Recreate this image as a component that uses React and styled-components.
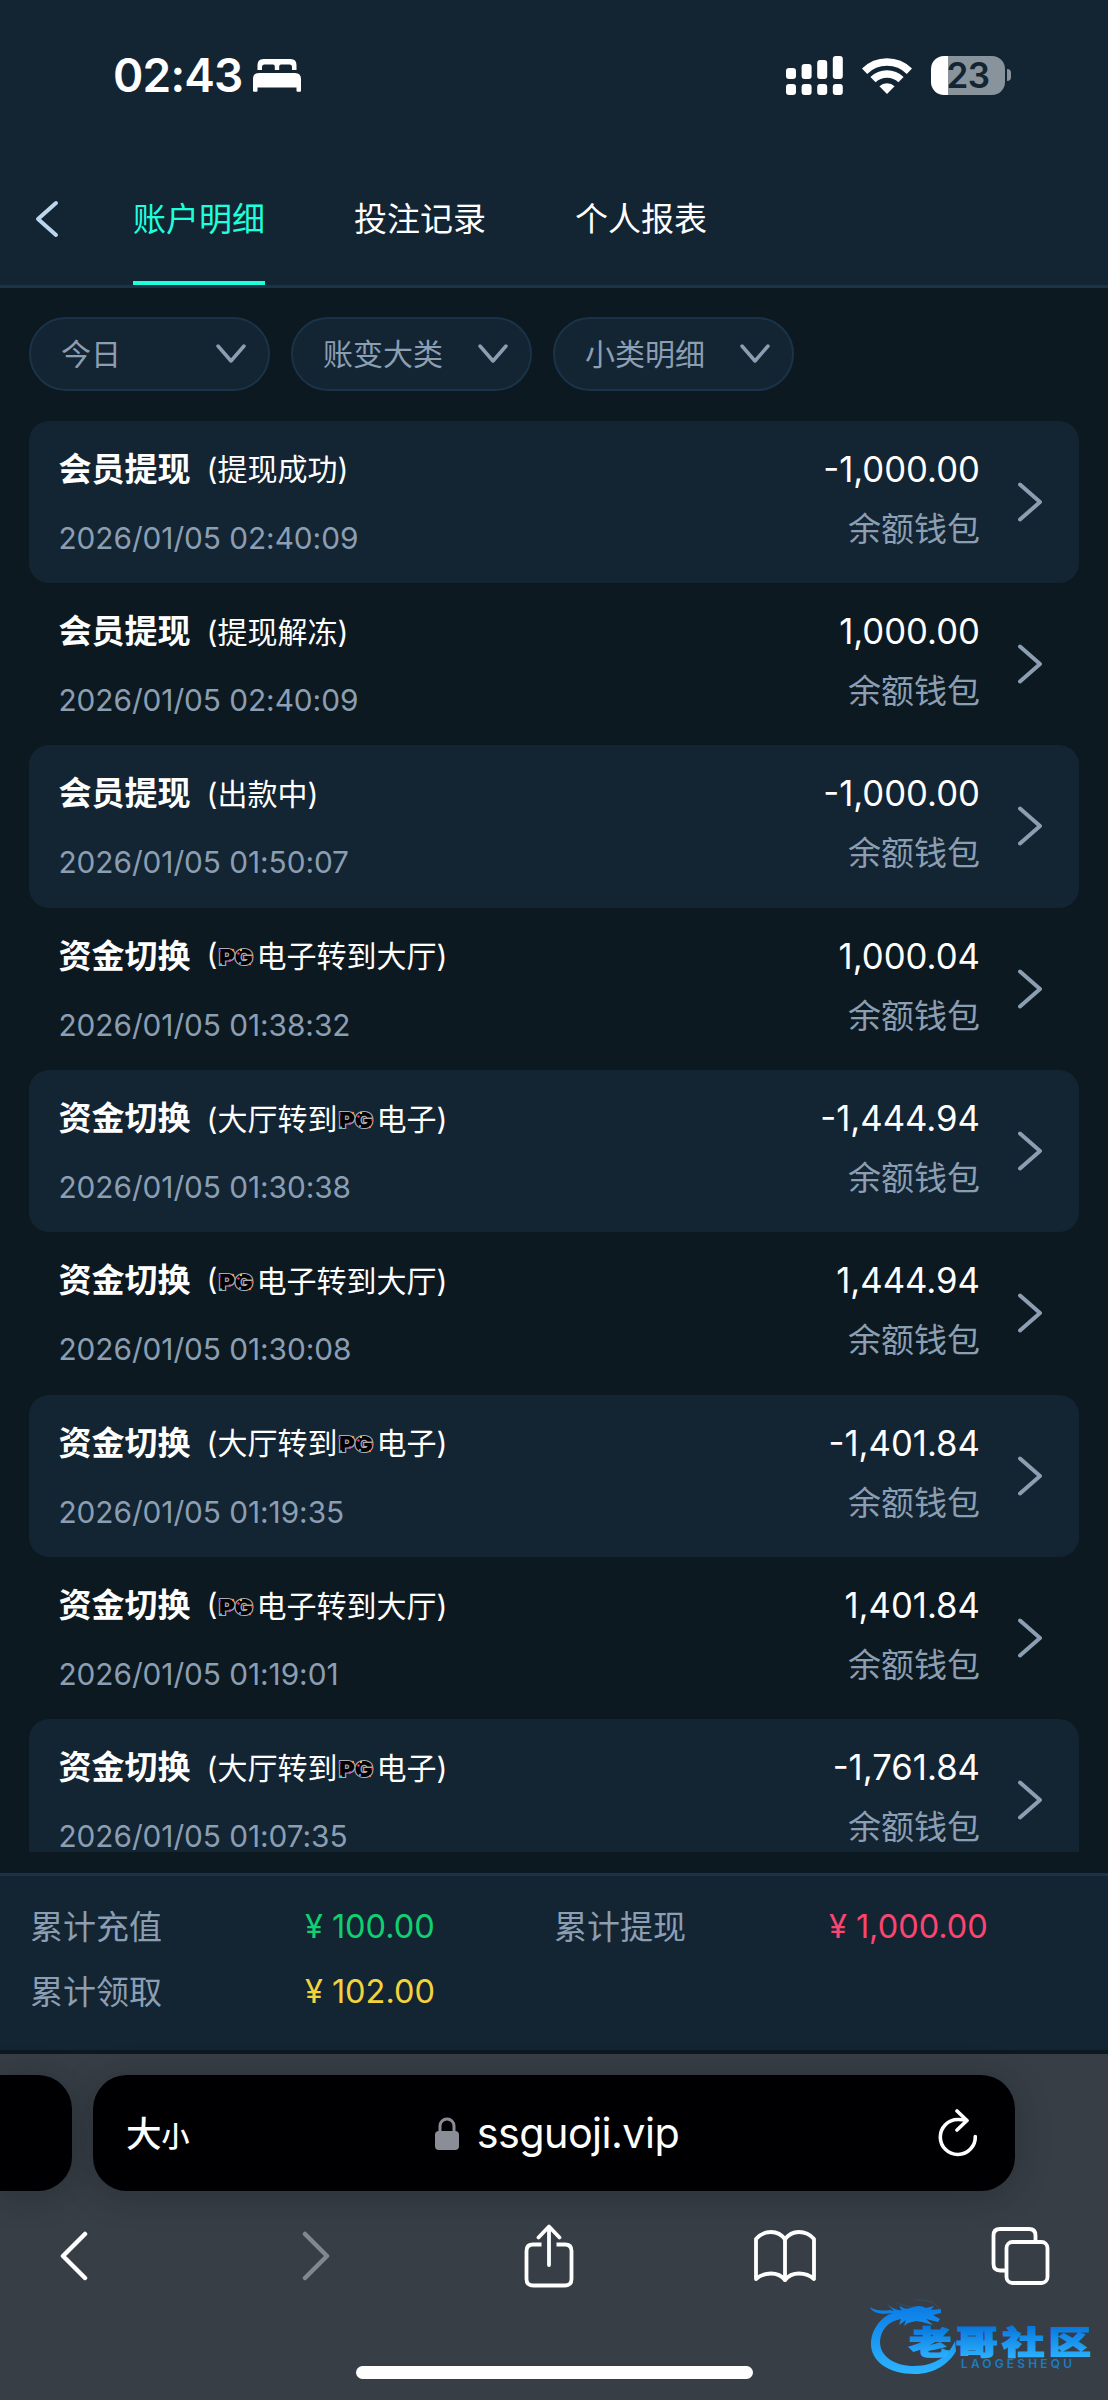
import styled, { createGlobalStyle } from "styled-components"

const color = {
    page: "#0d1921",
    panel: "#132433",
    line: "#1a3348",
    muted: "#8b9eb2",
    accent: "#1effdc",
    browser: "#383e45",
}

const GlobalStyle = createGlobalStyle`
    body {
        margin: 0;
        background: ${color.page};
        color: #fff;
        font-family: Inter, "Noto Sans CJK SC", sans-serif;
    }
`

const Screen = styled.div`
    width: 1108px;
    height: 2400px;
    display: flex;
    flex-direction: column;
    overflow: hidden;
    position: relative;
`

const StatusBar = styled.div`
    height: 150px;
    box-sizing: border-box;
    padding: 0 97px 0 113px;
    display: flex;
    align-items: center;
    justify-content: space-between;
    background: ${color.panel};
`

const Clock = styled.div`
    display: flex;
    align-items: center;
    gap: 10px;
    font-size: 46px;
    font-weight: 600;
    letter-spacing: -0.8px;
    line-height: 50px;
`

const StatusIcons = styled.div`
    display: flex;
    align-items: center;
    gap: 19px;
`

const Battery = styled.div`
    display: flex;
    align-items: center;
    gap: 2px;
`

const BatteryBody = styled.div`
    width: 74px;
    height: 39px;
    border-radius: 13px;
    background: linear-gradient(90deg, #fff 17px, #89939b 17px);
    color: ${color.panel};
    font-size: 35px;
    font-weight: 600;
    line-height: 39px;
    text-align: center;
    letter-spacing: -0.5px;
`

const BatteryCap = styled.div`
    width: 4px;
    height: 12px;
    border-radius: 0 5px 5px 0;
    background: #89939b;
`

const Header = styled.header`
    height: 138px;
    box-sizing: border-box;
    padding-left: 35px;
    display: flex;
    background: ${color.panel};
    border-bottom: 3px solid ${color.line};

    > svg {
        margin: 50px 74px 0 0;
        flex: none;
    }
`

const Tabs = styled.nav`
    display: flex;
    gap: 89px;
`

const Tab = styled.a`
    box-sizing: border-box;
    height: 135px;
    font-size: 33px;
    line-height: 139px;
    color: ${(props) => (props.$active ? color.accent : "#fff")};
    background: ${(props) =>
        props.$active ? `linear-gradient(${color.accent}, ${color.accent}) bottom / 100% 4px no-repeat` : "none"};
`

const Filters = styled.div`
    display: flex;
    gap: 21px;
    padding: 29px 29px 0;
`

const Filter = styled.div`
    width: 241px;
    height: 74px;
    box-sizing: border-box;
    padding: 0 22px 5px 30px;
    display: flex;
    align-items: center;
    justify-content: space-between;
    background: ${color.panel};
    border: 2.5px solid ${color.line};
    border-radius: 37px;
    color: ${color.muted};
    font-size: 30px;

    svg {
        margin-top: 5px;
    }
`

const List = styled.div`
    height: 1431.5px;
    margin: 29.5px 29px 21px;
    flex: none;
    overflow: hidden;
`

const Row = styled.div`
    height: 162.35px;
    box-sizing: border-box;
    padding: 0 37px 0 29.5px;
    display: flex;
    align-items: center;
    border-radius: 20px;

    &:nth-child(odd) {
        background: ${color.panel};
    }
`

const Info = styled.div`
    flex: 1;
`

const Title = styled.div`
    display: flex;
    align-items: center;
    height: 46px;
    white-space: pre;
    font-size: 33px;
    font-weight: 600;
`

const Note = styled.span`
    display: flex;
    align-items: center;
    margin-left: 16px;
    padding-top: 1px;
    font-size: 30px;
    font-weight: 400;

    svg {
        margin: 6px -1px 0 0;
    }
`

const Time = styled.div`
    margin-top: 26px;
    color: ${color.muted};
    font-size: 29.8px;
    line-height: 44px;
    letter-spacing: -0.05px;
`

const Money = styled.div`
    padding-bottom: 6px;
    text-align: right;
    font-size: 34.7px;
    line-height: 48px;
`

const Wallet = styled.div`
    margin-top: 12px;
    color: ${color.muted};
    font-size: 33px;
    line-height: 48px;
`

const Arrow = styled.div`
    width: 24px;
    margin-left: 38px;
    display: flex;
`

const Summary = styled.footer`
    height: 177px;
    box-sizing: border-box;
    padding: 17px 30px 0;
    display: grid;
    grid-template-columns: 274px 250px 274px 250px;
    grid-auto-rows: 65px;
    align-items: center;
    background: ${color.panel};
    border-top: 3px solid ${color.line};
    font-size: 33px;
    flex: none;
`

const Label = styled.span`
    padding-bottom: 2px;
    color: ${color.muted};
`

const Total = styled.span`
    display: flex;
    gap: 9px;
    padding: 1px 0 0 1px;
    font-size: 32.5px;
    color: ${(props) => props.$tone};
`

const Browser = styled.div`
    flex: 1;
    margin-top: 4px;
    background: ${color.browser};
    display: flex;
    flex-direction: column;
`

const AddressRow = styled.div`
    margin-top: 21px;
    display: flex;
    gap: 21px;
`

const PreviousTab = styled.div`
    width: 72px;
    height: 116px;
    border-radius: 0 34px 34px 0;
    background: #000003;
    box-shadow: 0 4px 34px rgba(10, 20, 28, 0.3);
`

const AddressBar = styled.div`
    width: 922px;
    height: 116px;
    box-sizing: border-box;
    padding: 0 37px 0 33px;
    display: flex;
    align-items: center;
    justify-content: space-between;
    border-radius: 34px;
    background: #000003;
    box-shadow: 0 4px 34px rgba(10, 20, 28, 0.3);
`

const TextSize = styled.div`
    width: 50px;
    padding-top: 5px;
    white-space: nowrap;
    font-size: 35.5px;
    font-weight: 500;
    line-height: 50px;

    small {
        font-size: 28px;
    }
`

const Host = styled.div`
    display: flex;
    align-items: center;
    gap: 18px;
    font-size: 41.3px;
    letter-spacing: -0.55px;
`

const Toolbar = styled.div`
    margin-top: 32px;
    padding-left: 60px;
    height: 66px;
    display: grid;
    grid-template-columns: 242px 222px 229.5px 237px 1fr;
    align-items: center;
`

const HomeIndicator = styled.div`
    width: 397px;
    height: 13px;
    margin: 77px auto 0;
    border-radius: 7px;
    background: #fff;
`

const Watermark = styled.svg`
    position: absolute;
    left: 867px;
    top: 2294px;
`

const records = [
    { type: "会员提现", note: "(提现成功)", time: "2026/01/05 02:40:09", amount: "-1,000.00" },
    { type: "会员提现", note: "(提现解冻)", time: "2026/01/05 02:40:09", amount: "1,000.00" },
    { type: "会员提现", note: "(出款中)", time: "2026/01/05 01:50:07", amount: "-1,000.00" },
    { type: "资金切换", note: "(PG电子转到大厅)", time: "2026/01/05 01:38:32", amount: "1,000.04" },
    { type: "资金切换", note: "(大厅转到PG电子)", time: "2026/01/05 01:30:38", amount: "-1,444.94" },
    { type: "资金切换", note: "(PG电子转到大厅)", time: "2026/01/05 01:30:08", amount: "1,444.94" },
    { type: "资金切换", note: "(大厅转到PG电子)", time: "2026/01/05 01:19:35", amount: "-1,401.84" },
    { type: "资金切换", note: "(PG电子转到大厅)", time: "2026/01/05 01:19:01", amount: "1,401.84" },
    { type: "资金切换", note: "(大厅转到PG电子)", time: "2026/01/05 01:07:35", amount: "-1,761.84" },
]

function Chevron({ width, height, points, stroke = color.muted, weight = 4 }) {
    return (
        <svg width={width} height={height} fill="none" stroke={stroke} strokeWidth={weight} strokeLinecap="round" strokeLinejoin="round">
            <polyline points={points} />
        </svg>
    )
}

function BedIcon() {
    return (
        <svg width="48" height="33" viewBox="0 0 48 33" fill="#fff">
            <path d="M4.500 11V6q0-6 6-6h27q6 0 6 6v5h-4.500V8q0-2.500-2.500-2.500H28q-1.800 0-1.800 2V11h-4.400V7.500q0-2-1.800-2h-8.500Q9 5.500 9 8v3z" />
            <path d="M0 32V20q0-6 6-6h36q6 0 6 6v12q0 .8-1 .8h-2.500q-1 0-1-1V28.500h-39V32q0 .8-1 .8H1q-1 0-1-.8z" />
        </svg>
    )
}

function SignalIcon() {
    const tops = [12, 8, 4, 0]
    return (
        <svg width="57" height="39" fill="#fff">
            {tops.map((top, i) => (
                <g key={top}>
                    <rect x={i * 15.6} y={top} width="10" height={23 - top} rx="3" />
                    <rect x={i * 15.6} y="28" width="10" height="11" rx="3" />
                </g>
            ))}
        </svg>
    )
}

function WifiIcon() {
    return (
        <svg width="50" height="37" viewBox="0 0 50 37" fill="none" stroke="#fff" strokeWidth="7.500">
            <path d="M2.600 14.200a32 32 0 0 1 44.800 0" />
            <path d="M11 22.600a20 20 0 0 1 28 0" />
            <path d="M25 37l-7.600-7.800a11 11 0 0 1 15.200 0z" fill="#fff" stroke="none" />
        </svg>
    )
}

function PgLogo() {
    return (
        <svg width="40" height="30" viewBox="0 -4 40 30">
            <text
                x="2"
                y="18.500"
                textLength="34"
                lengthAdjust="spacingAndGlyphs"
                fontFamily="Inter"
                fontSize="22"
                fontWeight="900"
                fill="#000"
                stroke="#a9adb2"
                strokeWidth="2.200"
                paintOrder="stroke"
            >
                PG
            </text>
            <circle cx="2.500" cy="5" r="1.200" fill="#7a3cff" />
            <circle cx="16" cy="4" r="1.200" fill="#ff8a3c" />
            <circle cx="13" cy="14.500" r="1.200" fill="#e04ad8" />
            <circle cx="4" cy="18.500" r="1.200" fill="#3cc8e8" />
            <circle cx="24" cy="4" r="1.200" fill="#f0c040" />
            <circle cx="21.500" cy="7.500" r="1.200" fill="#f03c8c" />
            <circle cx="23" cy="17" r="1.200" fill="#3c9cff" />
            <circle cx="35.500" cy="11" r="1.200" fill="#f0443c" />
            <circle cx="33" cy="18" r="1.200" fill="#ff7a3c" />
        </svg>
    )
}

function LockIcon() {
    return (
        <svg width="24" height="33" viewBox="0 0 24 33">
            <rect y="14" width="24" height="19" rx="4" fill="#8b8e97" />
            <path d="M5 15V9a7 7 0 0 1 14 0v6" fill="none" stroke="#8b8e97" strokeWidth="3" />
        </svg>
    )
}

function ReloadIcon() {
    return (
        <svg width="40" height="48" viewBox="0 0 40 48" fill="none" stroke="#fff" strokeWidth="3.600" strokeLinecap="round" strokeLinejoin="round">
            <path d="M37.300 27.500A17.500 17.500 0 1 1 19.800 10.500q5 0 8.700 1" />
            <path d="M19 2l10 9.500-10 9.500" />
        </svg>
    )
}

function ShareIcon() {
    return (
        <svg width="50" height="64" viewBox="0 0 50 64" fill="none" stroke="#fff" strokeWidth="3.800" strokeLinecap="round" strokeLinejoin="round">
            <path d="M17.500 20.500H9q-6.500 0-6.500 6.500v28q0 6.500 6.500 6.500h32q6.500 0 6.500-6.500V27q0-6.500-6.500-6.500h-8.500" strokeLinecap="butt" />
            <path d="M25 41V3M14.500 13.500L25 2.500l10.500 11" />
        </svg>
    )
}

function BookIcon() {
    return (
        <svg width="62" height="52" viewBox="0 0 62 52" fill="none" stroke="#fff" strokeWidth="3.800" strokeLinecap="round" strokeLinejoin="round">
            <path d="M31 9.500Q26 2 17 2 8 2 2 9v40q6-5.500 15-5.500T31 50q5-6.500 14-6.500T60 49V9q-6-7-15-7T31 9.500z" />
            <path d="M31 9.500V50" />
        </svg>
    )
}

function TabsIcon() {
    return (
        <svg width="59" height="58" viewBox="0 0 59 58" fill="none" stroke="#fff" strokeWidth="3.800">
            <rect x="15.500" y="15" width="41" height="41" rx="6" />
            <path d="M15 43.500H9q-6.500 0-6.500-6.500V8.500Q2.500 2 9 2h29q6.500 0 6.500 6.500V15" />
        </svg>
    )
}

function CommunityMark() {
    return (
        <Watermark width="236" height="84" viewBox="0 0 236 84">
            <defs>
                <linearGradient id="swirl" x1="0" y1="10" x2="0" y2="80" gradientUnits="userSpaceOnUse">
                    <stop offset="0" stopColor="#0a7be6" />
                    <stop offset="1" stopColor="#2cb4ff" />
                </linearGradient>
                <linearGradient id="name" x1="0" y1="33" x2="0" y2="62" gradientUnits="userSpaceOnUse">
                    <stop offset="0" stopColor="#0878df" />
                    <stop offset="1" stopColor="#2aaefc" />
                </linearGradient>
            </defs>
            <g fill="url(#swirl)">
                <path d="M3 13q7 5 20 3l4 1-7-7q8 7 15 6-3-2-2-4 5 4 10 2 9-4 16 0l8-2-3 4 10-1v4l-8 2 7 4-2 3-12-3 7 6-11-3-6-1-8 2-4 3 2-6-7 5 2-6C20 27 13 38 13 48c0 14 14 24 34 24 22 0 35-11 41-25l1 10C82 70 67 80 48 80 21 80 4 67 4 50 4 35 15 22 26 19 14 21 5 19 3 13z" />
            </g>
            <path d="M28 8q12 6 22 5M48 6q20-1 24 9" fill="none" stroke="#285f8c" strokeWidth="1" opacity="0.500" />
            <text
                x="31.500"
                y="60"
                transform="scale(1.330 1)"
                textLength="137"
                fontFamily="Noto Sans CJK SC"
                fontSize="32"
                fontWeight="900"
                fill="url(#name)"
                stroke="url(#name)"
                strokeWidth="1.200"
            >
                老哥社区
            </text>
            <text x="94" y="73.500" textLength="111" fontFamily="Inter" fontSize="12" fontWeight="600" fill="#1a7cc4">
                LAOGESHEQU
            </text>
        </Watermark>
    )
}

function App() {
    return (
        <Screen>
            <GlobalStyle />
            <StatusBar>
                <Clock>
                    02:43
                    <BedIcon />
                </Clock>
                <StatusIcons>
                    <SignalIcon />
                    <WifiIcon />
                    <Battery>
                        <BatteryBody>23</BatteryBody>
                        <BatteryCap />
                    </Battery>
                </StatusIcons>
            </StatusBar>
            <Header>
                <Chevron width={24} height={38} points="21,3 3,19 21,35" stroke="#bcd6ee" />
                <Tabs>
                    <Tab $active>账户明细</Tab>
                    <Tab>投注记录</Tab>
                    <Tab>个人报表</Tab>
                </Tabs>
            </Header>
            <Filters>
                {["今日", "账变大类", "小类明细"].map((name) => (
                    <Filter key={name}>
                        {name}
                        <Chevron width={30} height={20} points="2,2 15,17 28,2" weight={3.5} />
                    </Filter>
                ))}
            </Filters>
            <List>
                {records.map((record) => {
                    const [before, after] = record.note.split("PG")
                    return (
                        <Row key={record.time + record.amount}>
                            <Info>
                                <Title>
                                    {record.type}
                                    <Note>
                                        {before}
                                        {after && <PgLogo />}
                                        {after}
                                    </Note>
                                </Title>
                                <Time>{record.time}</Time>
                            </Info>
                            <Money>
                                {record.amount}
                                <Wallet>余额钱包</Wallet>
                            </Money>
                            <Arrow>
                                <Chevron width={24} height={40} points="2,2.500 22,20 2,37.500" />
                            </Arrow>
                        </Row>
                    )
                })}
            </List>
            <Summary>
                <Label>累计充值</Label>
                <Total $tone="#10d070">
                    <span>¥</span>100.00
                </Total>
                <Label>累计提现</Label>
                <Total $tone="#fb4570">
                    <span>¥</span>1,000.00
                </Total>
                <Label>累计领取</Label>
                <Total $tone="#f3d33b">
                    <span>¥</span>102.00
                </Total>
            </Summary>
            <Browser>
                <AddressRow>
                    <PreviousTab />
                    <AddressBar>
                        <TextSize>
                            大<small>小</small>
                        </TextSize>
                        <Host>
                            <LockIcon />
                            ssguoji.vip
                        </Host>
                        <ReloadIcon />
                    </AddressBar>
                </AddressRow>
                <Toolbar>
                    <Chevron width={28} height={50} points="25,3 3,25 25,47" stroke="#fff" weight={4.5} />
                    <Chevron width={28} height={50} points="3,3 25,25 3,47" stroke="#84888c" weight={4.5} />
                    <ShareIcon />
                    <BookIcon />
                    <TabsIcon />
                </Toolbar>
                <HomeIndicator />
            </Browser>
            <CommunityMark />
        </Screen>
    )
}

export default App
